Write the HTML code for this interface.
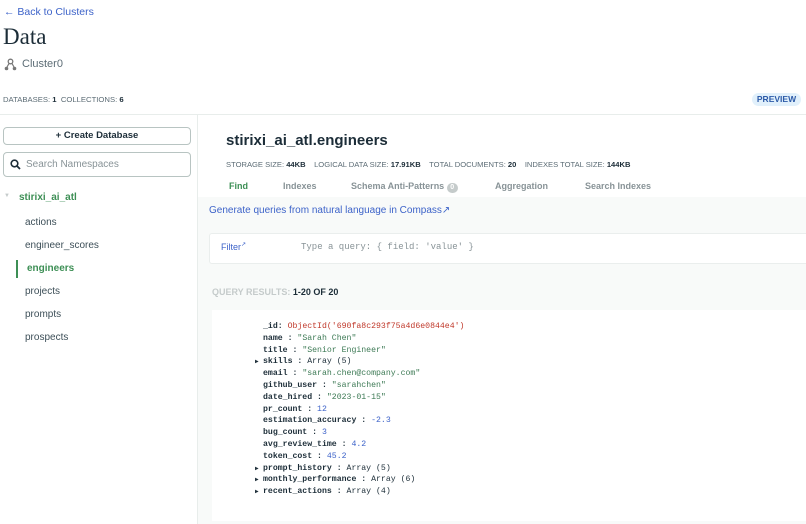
<!DOCTYPE html>
<html><head><meta charset="utf-8"><style>
*{margin:0;padding:0;box-sizing:border-box}
body{width:806px;height:524px;overflow:hidden;background:#fff;font-family:"Liberation Sans",sans-serif;color:#1c2d38;position:relative}
.a{position:absolute;white-space:nowrap}
.mono{font-family:"Liberation Mono",monospace}
.s{display:inline-block;width:8px;font-size:6px;font-weight:normal}
</style></head><body>
<div class="a" style="left:4px;top:6px;font-size:10.5px;color:#3d63c9">&#8592; Back to Clusters</div>
<div class="a" style="left:3px;top:24px;font-size:23px;font-family:'Liberation Serif',serif;color:#1c2d38">Data</div>
<svg class="a" style="left:4px;top:58px" width="13" height="13" viewBox="0 0 13 13"><circle cx="6.5" cy="3.5" r="2.3" fill="none" stroke="#777" stroke-width="1.3"/><circle cx="2.5" cy="10.5" r="1.8" fill="#777"/><circle cx="10.5" cy="10.5" r="1.8" fill="#777"/><path d="M5 5.5L3 9M8 5.5L10 9" stroke="#777" stroke-width="1.2"/></svg>
<div class="a" style="left:22px;top:58px;font-size:11px;color:#5c6c75">Cluster0</div>
<div class="a" style="left:3px;top:95px;font-size:7.7px;color:#5c6c75">DATABASES: <b style="color:#1c2d38">1</b> &nbsp;COLLECTIONS: <b style="color:#1c2d38">6</b></div>
<div class="a" style="left:752px;top:93px;width:49px;height:13px;border-radius:7px;background:#e1f0fb;color:#2c5aa8;font-size:8.5px;font-weight:bold;text-align:center;line-height:13px">PREVIEW</div>
<div class="a" style="left:0;top:114px;width:806px;height:1px;background:#e8edeb"></div>
<div class="a" style="left:197px;top:115px;width:1px;height:409px;background:#e8edeb"></div>
<div class="a" style="left:3px;top:127px;width:188px;height:18px;border:1px solid #b8c4c2;border-radius:4px;font-size:9.5px;font-weight:bold;text-align:center;line-height:16px">+ Create Database</div>
<div class="a" style="left:3px;top:152px;width:188px;height:25px;border:1px solid #b8c4c2;border-radius:4px"></div>
<svg class="a" style="left:10px;top:159px" width="11" height="11" viewBox="0 0 11 11"><circle cx="4.5" cy="4.5" r="3.3" fill="none" stroke="#1c2d38" stroke-width="1.6"/><path d="M7 7L10 10" stroke="#1c2d38" stroke-width="1.8"/></svg>
<div class="a" style="left:26px;top:159px;font-size:10px;color:#889397">Search Namespaces</div>
<div class="a" style="left:4px;top:193px;font-size:6px;color:#c5cbcb">&#9660;</div>
<div class="a" style="left:19px;top:192px;font-size:10px;font-weight:bold;color:#3d8f55">stirixi_ai_atl</div>
<div class="a" style="left:25px;top:217px;font-size:10px;color:#3d4f58">actions</div>
<div class="a" style="left:25px;top:240px;font-size:10px;color:#3d4f58">engineer_scores</div>
<div class="a" style="left:16px;top:260px;width:2px;height:18px;background:#3d8f55"></div>
<div class="a" style="left:27px;top:263px;font-size:10px;font-weight:bold;color:#3d8f55">engineers</div>
<div class="a" style="left:25px;top:286px;font-size:10px;color:#3d4f58">projects</div>
<div class="a" style="left:25px;top:309px;font-size:10px;color:#3d4f58">prompts</div>
<div class="a" style="left:25px;top:332px;font-size:10px;color:#3d4f58">prospects</div>

<div class="a" style="left:226px;top:132px;font-size:15px;font-weight:bold;color:#1c2d38">stirixi_ai_atl.engineers</div>
<div class="a" style="left:226px;top:160px;font-size:7.6px;color:#5c6c75">STORAGE SIZE: <b style="color:#1c2d38">44KB</b> &nbsp;&nbsp;&nbsp;LOGICAL DATA SIZE: <b style="color:#1c2d38">17.91KB</b> &nbsp;&nbsp;&nbsp;TOTAL DOCUMENTS: <b style="color:#1c2d38">20</b> &nbsp;&nbsp;&nbsp;INDEXES TOTAL SIZE: <b style="color:#1c2d38">144KB</b></div>
<div class="a" style="left:229px;top:181px;font-size:9px;font-weight:bold;color:#3d8f55">Find</div>
<div class="a" style="left:283px;top:181px;font-size:9px;font-weight:bold;color:#889397">Indexes</div>
<div class="a" style="left:351px;top:181px;font-size:9px;font-weight:bold;color:#889397">Schema Anti-Patterns <span style="display:inline-block;width:11px;height:10px;border-radius:5px;background:#c5cbcb;color:#fff;font-size:7px;text-align:center;line-height:10px">0</span></div>
<div class="a" style="left:495px;top:181px;font-size:9px;font-weight:bold;color:#889397">Aggregation</div>
<div class="a" style="left:585px;top:181px;font-size:9px;font-weight:bold;color:#889397">Search Indexes</div>
<div class="a" style="left:198px;top:197px;width:608px;height:327px;background:#f8faf9"></div>
<div class="a" style="left:209px;top:205px;font-size:10px;color:#3d63c9">Generate queries from natural language in Compass&#8599;</div>
<div class="a" style="left:209px;top:233px;width:597px;height:31px;background:#fff;border:1px solid #eaeeed;border-right:none;border-radius:3px 0 0 3px"></div>
<div class="a" style="left:221px;top:241px;font-size:9px;color:#3d63c9">Filter<sup style="font-size:6px">&#8599;</sup></div>
<div class="a mono" style="left:301px;top:242px;font-size:9px;color:#889397">Type a query: { field: 'value' }</div>
<div class="a" style="left:212px;top:287px;font-size:9px;font-weight:bold;color:#c5cbcb">QUERY RESULTS: <span style="color:#1c2d38">1-20 OF 20</span></div>
<div class="a" style="left:212px;top:310px;width:594px;height:211px;background:#fff"></div>
<div class="a mono" style="left:255px;top:321px;font-size:8.2px;line-height:11.8px;color:#1c2d38;font-weight:bold">
<div><span class="s"></span>_id: <span style="font-weight:normal;color:#c0392b">ObjectId('690fa8c293f75a4d6e0844e4')</span></div>
<div><span class="s"></span>name : <span style="font-weight:normal;color:#3d7a55">"Sarah Chen"</span></div>
<div><span class="s"></span>title : <span style="font-weight:normal;color:#3d7a55">"Senior Engineer"</span></div>
<div><span class="s">&#9654;</span>skills : <span style="font-weight:normal">Array (5)</span></div>
<div><span class="s"></span>email : <span style="font-weight:normal;color:#3d7a55">"sarah.chen@company.com"</span></div>
<div><span class="s"></span>github_user : <span style="font-weight:normal;color:#3d7a55">"sarahchen"</span></div>
<div><span class="s"></span>date_hired : <span style="font-weight:normal;color:#3d7a55">"2023-01-15"</span></div>
<div><span class="s"></span>pr_count : <span style="font-weight:normal;color:#3d63c9">12</span></div>
<div><span class="s"></span>estimation_accuracy : <span style="font-weight:normal;color:#3d63c9">-2.3</span></div>
<div><span class="s"></span>bug_count : <span style="font-weight:normal;color:#3d63c9">3</span></div>
<div><span class="s"></span>avg_review_time : <span style="font-weight:normal;color:#3d63c9">4.2</span></div>
<div><span class="s"></span>token_cost : <span style="font-weight:normal;color:#3d63c9">45.2</span></div>
<div><span class="s">&#9654;</span>prompt_history : <span style="font-weight:normal">Array (5)</span></div>
<div><span class="s">&#9654;</span>monthly_performance : <span style="font-weight:normal">Array (6)</span></div>
<div><span class="s">&#9654;</span>recent_actions : <span style="font-weight:normal">Array (4)</span></div>
</div>
</body></html>
